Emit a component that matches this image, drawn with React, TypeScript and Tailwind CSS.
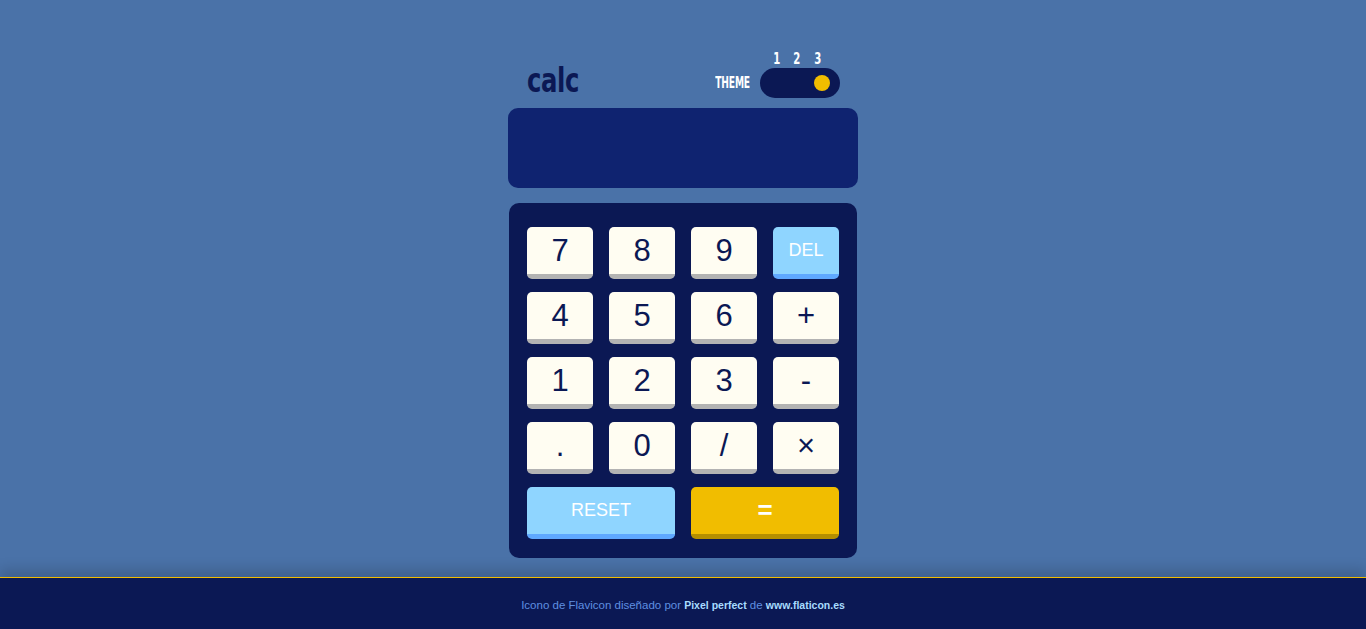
import React from 'react';

const keys: { label: string; kind?: 'del' }[] = [
  { label: '7' }, { label: '8' }, { label: '9' }, { label: 'DEL', kind: 'del' },
  { label: '4' }, { label: '5' }, { label: '6' }, { label: '+' },
  { label: '1' }, { label: '2' }, { label: '3' }, { label: '-' },
  { label: '.' }, { label: '0' }, { label: '/' }, { label: '×' },
];

const condensed = "font-['DejaVu_Sans_Condensed','DejaVu_Sans',sans-serif] font-bold";

export default function App() {
  return (
    <div className="flex min-h-screen flex-col bg-[#4a72a8] font-['Liberation_Sans',Arial,sans-serif]">
      <main className="flex flex-1 justify-center pt-[52px] pb-[19px]">
        <div className="flex w-[350px] flex-col">
          <header className="flex items-end justify-between pl-[19px] pr-[18px]">
            <h1
              className={`${condensed} mb-[1px] inline-block origin-left scale-x-[0.82] text-[33px] leading-none tracking-[-0.5px] text-[#0b1854]`}
            >
              calc
            </h1>
            <div className="flex items-end gap-[10px]">
              <span
                className={`${condensed} mb-[7px] inline-block origin-right scale-x-[0.68] whitespace-nowrap text-[15px] leading-none tracking-[-0.3px] text-white`}
              >
                THEME
              </span>
              <div className="flex flex-col">
                <div className={`${condensed} flex h-[16px] items-start justify-between pl-[12px] pr-[18px] text-[15px] leading-none text-white`}>
                  <span className="inline-block scale-x-[0.75]">1</span>
                  <span className="inline-block scale-x-[0.75]">2</span>
                  <span className="inline-block scale-x-[0.75]">3</span>
                </div>
                <div className="flex h-[30px] w-[80px] items-center justify-end rounded-full bg-[#0b1854] pr-[10px]">
                  <span className="h-[16px] w-[16px] rounded-full bg-[#f1bd00]" />
                </div>
              </div>
            </div>
          </header>

          <div className="mt-[10px] h-[80px] rounded-[10px] bg-[#0f2370]" />

          <div className="mx-[1px] mt-[15px] rounded-[10px] bg-[#0b1854] pt-6 pb-[19px] px-[18px]">
            <div className="grid grid-cols-4 gap-x-4 gap-y-[13px]">
              {keys.map((k) =>
                k.kind === 'del' ? (
                  <button
                    key={k.label}
                    className="flex h-[52px] items-center justify-center rounded-[5px] border-b-[5px] border-[#5fa8ff] bg-[#8fd5ff] text-[18px] text-white"
                  >
                    {k.label}
                  </button>
                ) : (
                  <button
                    key={k.label}
                    className="flex h-[52px] items-center justify-center rounded-[5px] border-b-[5px] border-[#b3b3b3] bg-[#fffdf2] text-[31px] leading-none text-[#0b1854]"
                  >
                    {k.label}
                  </button>
                )
              )}
              <button className="col-span-2 flex h-[52px] items-center justify-center rounded-[5px] border-b-[5px] border-[#5fa8ff] bg-[#8fd5ff] text-[18px] text-white">
                RESET
              </button>
              <button className="col-span-2 flex h-[52px] items-center justify-center rounded-[5px] border-b-[5px] border-[#b58f00] bg-[#f1bd00] text-[26px] font-bold text-white">
                =
              </button>
            </div>
          </div>
        </div>
      </main>

      <footer className="flex h-[52px] items-center justify-center border-t border-[#f1bd00] bg-[#0b1854] pt-[4px] text-[11.5px] text-[#5f8fe0] shadow-[0_-8px_12px_rgba(0,0,0,0.15)]">
        <span>
          Icono de Flavicon diseñado por{' '}
          <a className="text-[10.5px] font-semibold text-[#a8dcff]">Pixel perfect</a> de{' '}
          <a className="text-[10.5px] font-semibold text-[#a8dcff]">www.flaticon.es</a>
        </span>
      </footer>
    </div>
  );
}
